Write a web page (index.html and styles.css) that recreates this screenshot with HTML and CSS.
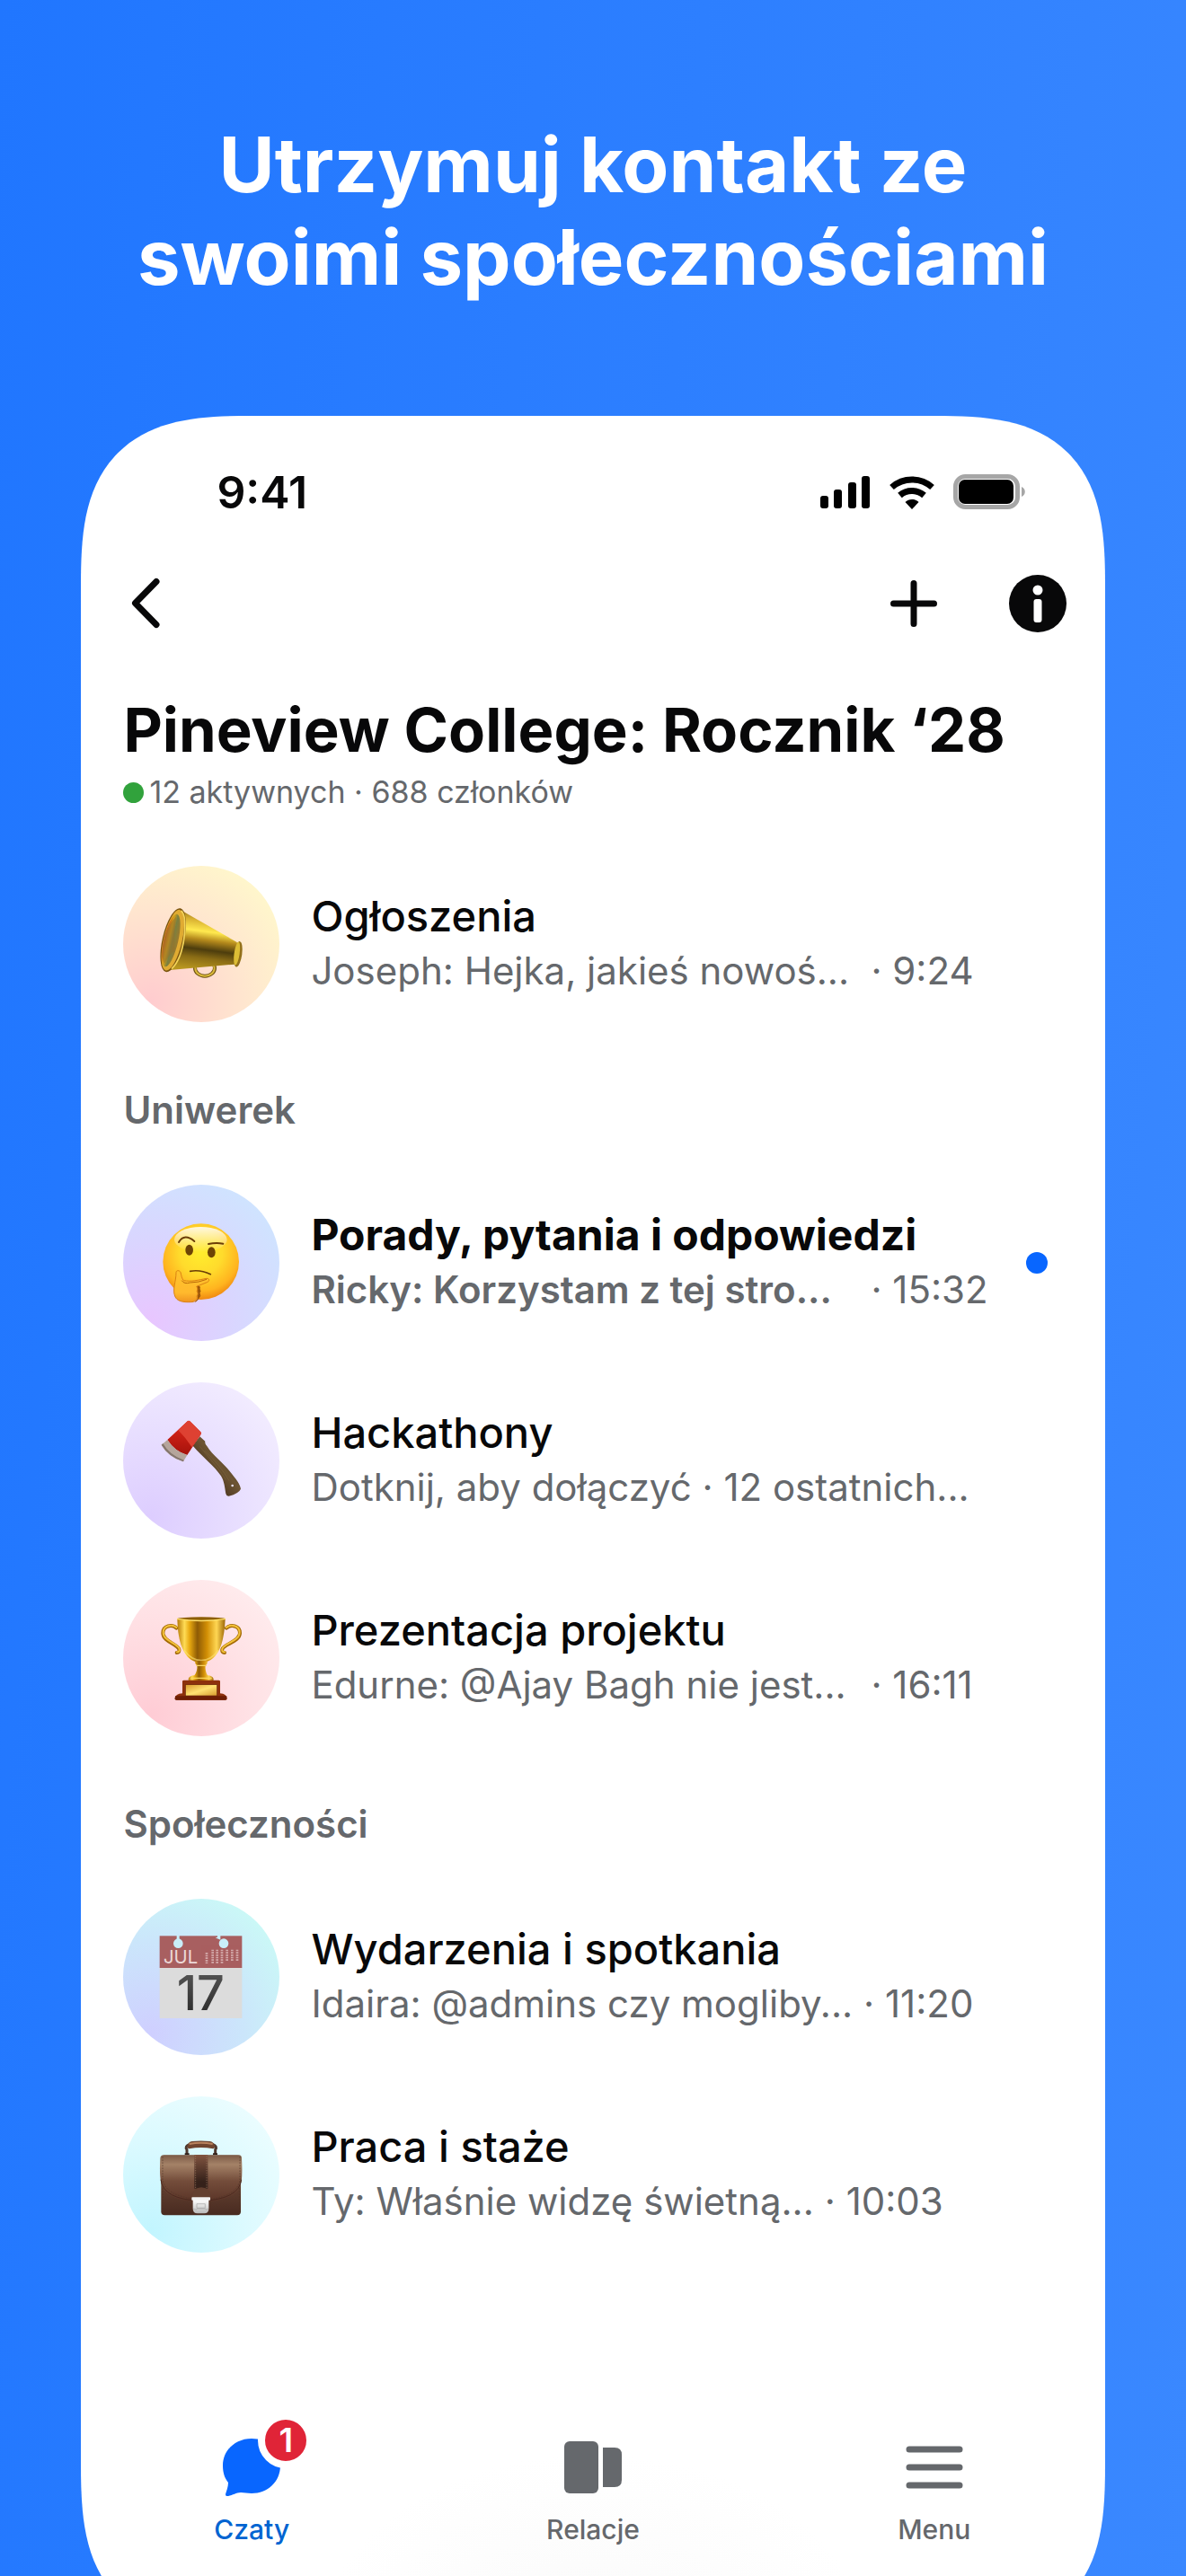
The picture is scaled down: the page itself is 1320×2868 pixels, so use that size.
FILE: index.html
```html
<!DOCTYPE html>
<html lang="pl">
<head>
  <meta charset="UTF-8">
  <meta name="viewport" content="width=device-width, initial-scale=1.0">
  <title>Pineview College: Rocznik ‘28</title>
  <link rel="stylesheet" href="styles.css">
</head>
<body>
  <div class="page">
    <h1 class="headline">Utrzymuj kontakt ze<br>swoimi społecznościami</h1>

    <main class="phone">
      <div class="status">
        <span class="clock">9:41</span>
        <svg class="status-icons" width="230" height="40" viewBox="0 0 230 40" aria-hidden="true">
          <rect x="1" y="24" width="9" height="14" rx="3"/>
          <rect x="16" y="17" width="9" height="21" rx="3"/>
          <rect x="32" y="9" width="9" height="29" rx="3"/>
          <rect x="47" y="2" width="9" height="36" rx="3"/>
          <g fill="none" stroke="#000" stroke-width="7">
            <path d="M80.500 14.500a34 34 0 0 1 45 0"/>
            <path d="M89.500 23.500a20.500 20.500 0 0 1 27 0"/>
          </g>
          <path d="M103 39l-7.500-8c4-4 11-4 15 0z"/>
          <rect x="151.500" y="2.500" width="69" height="34" rx="11" fill="none" stroke="#a6a6a6" stroke-width="5"/>
          <rect x="155" y="6" width="61" height="27" rx="7"/>
          <path d="M225 14c5 2 5 9 0 11z" fill="#a6a6a6"/>
        </svg>
      </div>

      <nav class="topbar">
        <button class="icon-btn" aria-label="Wstecz">
          <svg width="64" height="64" viewBox="0 0 64 64"><path d="M40 7.500L16.500 31.500l23.500 24" fill="none" stroke="#080809" stroke-width="7" stroke-linecap="round" stroke-linejoin="round"/></svg>
        </button>
        <div class="actions">
          <button class="icon-btn" aria-label="Dodaj">
            <svg width="64" height="64" viewBox="0 0 64 64"><path d="M32 9.500v45M9.500 32h45" stroke="#080809" stroke-width="7" stroke-linecap="round"/></svg>
          </button>
          <button class="icon-btn" aria-label="Informacje">
            <svg width="64" height="64" viewBox="0 0 64 64"><circle cx="32" cy="32" r="32" fill="#080809"/><circle cx="32" cy="17" r="5.500" fill="#fff"/><rect x="27.500" y="27" width="9" height="26" rx="3" fill="#fff"/></svg>
          </button>
        </div>
      </nav>

      <h2 class="title">Pineview College: Rocznik ‘28</h2>
      <p class="meta"><span class="online"></span>12 aktywnych · 688 członków</p>

      <ul class="chats">
        <li>
          <a class="chat" href="#">
            <svg class="avatar avatar-yellow" viewBox="50 40 522 522" aria-hidden="true">
              <defs>
                <linearGradient id="horn" x1="0.600" y1="0" x2="0.450" y2="1">
                  <stop offset="0" stop-color="#7a5c10"/><stop offset=".18" stop-color="#d8b030"/><stop offset=".36" stop-color="#ffe94f"/><stop offset=".5" stop-color="#b58a1c"/><stop offset=".66" stop-color="#4d3d0d"/><stop offset=".8" stop-color="#8a6c15"/><stop offset="1" stop-color="#b8961f"/>
                </linearGradient>
                <linearGradient id="bell" x1="0" y1="0" x2="1" y2="0">
                  <stop offset="0" stop-color="#c8541a"/><stop offset=".35" stop-color="#d3a017"/><stop offset=".6" stop-color="#7a8040"/><stop offset="1" stop-color="#9c7a2c"/>
                </linearGradient>
              </defs>
              <ellipse cx="323" cy="381" rx="33" ry="27" fill="none" stroke="#6d5113" stroke-width="12"/>
              <ellipse cx="323" cy="382" rx="32" ry="26" fill="none" stroke="#d9b93a" stroke-width="6"/>
              <path d="M243 188L430 295q10 38-8 74L206 388z" fill="url(#horn)"/>
              <ellipse cx="434" cy="335" rx="13" ry="43" transform="rotate(8 434 335)" fill="#92701a"/>
              <ellipse cx="430" cy="333" rx="9" ry="39" transform="rotate(8 430 333)" fill="#dcbd35"/>
              <ellipse cx="217" cy="288" rx="36" ry="109" transform="rotate(13 217 288)" fill="#7b5511"/>
              <ellipse cx="216" cy="288" rx="31" ry="104" transform="rotate(13 216 288)" fill="#e0ab32"/>
              <ellipse cx="210" cy="289" rx="24" ry="90" transform="rotate(13 210 289)" fill="url(#bell)"/>
              <path d="M190 270q-18 75-1 96 13-30 34-44-4-48 4-112-22 20-37 60z" fill="#97712b" opacity=".55"/>
              <path d="M244 190q18 15 10 88-9 74-42 106" fill="none" stroke="#f3d45a" stroke-width="5"/>
            </svg>
            <div class="chat-text">
              <h4 class="name">Ogłoszenia</h4>
              <p class="line"><span class="preview wide">Joseph: Hejka, jakieś nowoś...</span><time>· 9:24</time></p>
            </div>
          </a>
        </li>
      </ul>

      <h3 class="section">Uniwerek</h3>
      <ul class="chats">
        <li>
          <a class="chat unread" href="#">
            <svg class="avatar avatar-blue" viewBox="50 54 522 522" aria-hidden="true">
              <defs>
                <radialGradient id="face" cx=".5" cy=".38" r=".63">
                  <stop offset="0" stop-color="#ffed2d"/><stop offset=".45" stop-color="#ffdb2c"/><stop offset=".8" stop-color="#ffb41f"/><stop offset="1" stop-color="#ee8410"/>
                </radialGradient>
                <linearGradient id="shine" x1="0" y1="0" x2="0" y2="1">
                  <stop offset="0" stop-color="#fff"/><stop offset="1" stop-color="#fff" stop-opacity="0"/>
                </linearGradient>
                <linearGradient id="hand" x1="0" y1="0" x2="0" y2="1">
                  <stop offset="0" stop-color="#ffc32c"/><stop offset=".7" stop-color="#ffb92d"/><stop offset="1" stop-color="#f09420"/>
                </linearGradient>
              </defs>
              <circle cx="310" cy="311" r="127" fill="url(#face)"/>
              <ellipse cx="309" cy="237" rx="88" ry="42" fill="url(#shine)" opacity=".85"/>
              <ellipse cx="271" cy="272" rx="13" ry="18" fill="#6d4305"/>
              <ellipse cx="345" cy="280" rx="13" ry="18" fill="#6d4305"/>
              <path d="M236 246q19-31 52-3M335 252q26-6 49-1" fill="none" stroke="#6b3d07" stroke-width="6" stroke-linecap="round"/>
              <path d="M274 343q34-6 68 10" fill="none" stroke="#6b3d07" stroke-width="5" stroke-linecap="round"/>
              <path d="M298 389q12 5 7 13 6 8 0 14 6 10-3 17-4 9-11 12l10-10z" fill="#9d570b" stroke="#9d570b" stroke-width="3"/>
              <path d="M227 347c0-8 12-8 15 0 3 12 4 20 10 27 26 5 49-2 77-7 11 0 10 10 1 13l-35 14c4 6 5 10 1 15 5 7 4 12 0 17 4 12-6 20-20 20-27 1-47-3-53-20-9-23 4-48 4-79z" fill="url(#hand)" stroke="#d98014" stroke-width="3"/>
              <path d="M246 374q8 13 28 7 28 0 55-11" fill="none" stroke="#b96909" stroke-width="3"/>
            </svg>
            <div class="chat-text">
              <h4 class="name">Porady, pytania i odpowiedzi</h4>
              <p class="line"><span class="preview wide">Ricky: Korzystam z tej stro...</span><time>· 15:32</time></p>
            </div>
            <span class="unread-dot"></span>
          </a>
        </li>
        <li>
          <a class="chat" href="#">
            <svg class="avatar avatar-violet" viewBox="50 56 522 522" aria-hidden="true">
              <defs>
                <linearGradient id="handle" x1="0" y1="1" x2="1" y2="0">
                  <stop offset=".3" stop-color="#4b3520"/><stop offset=".55" stop-color="#6d5533"/><stop offset=".75" stop-color="#4b3b25"/>
                </linearGradient>
                <linearGradient id="axe" x1="0" y1="0" x2="0" y2="1">
                  <stop offset="0" stop-color="#e1281b"/><stop offset="1" stop-color="#a5120b"/>
                </linearGradient>
              </defs>
              <path d="M283 268L306 237l18 16q-2 8 6 16c18 30 57 59 76 84 22 27 35 44 37 59q-6 15-40 24-8 1-10-8c-4-22-5-41-16-59-22-34-63-64-94-101z" fill="url(#handle)"/>
              <path d="M322 284q55 52 82 101M306 270q60 70 88 112" fill="none" stroke="#8b7048" stroke-width="2" opacity=".6"/>
              <circle cx="415" cy="401" r="4" fill="#e9e2f5"/>
              <path d="M198 248L265 186q4-4 8 0l36 36q4 4 0 9l-45 68q-42-12-66-51z" fill="url(#axe)"/>
              <path d="M234 216l31-30q4-4 8 0l36 36q4 4 0 9l-29 42q-22-33-46-57z" fill="#de4132"/>
              <path d="M198 248q24 38 66 51l-13 22q-50-15-73-56z" fill="#b5a59b"/>
              <path d="M178 265q22 38 73 56l2-5q-47-16-70-56z" fill="#85766d"/>
            </svg>
            <div class="chat-text">
              <h4 class="name">Hackathony</h4>
              <p class="line"><span class="preview">Dotknij, aby dołączyć · 12 ostatnich...</span></p>
            </div>
          </a>
        </li>
        <li>
          <a class="chat" href="#">
            <svg class="avatar avatar-pink" viewBox="50 57 522 522" aria-hidden="true">
              <defs>
                <linearGradient id="cup" x1="0" y1="0" x2="1" y2="0">
                  <stop offset="0" stop-color="#b77a08"/><stop offset=".15" stop-color="#ffdc55"/><stop offset=".26" stop-color="#e6a70f"/><stop offset=".42" stop-color="#8e5b05"/><stop offset=".62" stop-color="#d28f05"/><stop offset=".82" stop-color="#ffd653"/><stop offset="1" stop-color="#9d6706"/>
                </linearGradient>
                <linearGradient id="plate" x1="0" y1="0" x2="1" y2="1">
                  <stop offset="0" stop-color="#d99a2d"/><stop offset=".5" stop-color="#ffe272"/><stop offset="1" stop-color="#d69a2d"/>
                </linearGradient>
              </defs>
              <g fill="none" stroke-linecap="round">
                <path d="M228 218c-14-14-45-9-45 17 0 28 49 36 54 54q2 11-8 11" stroke="#a36a05" stroke-width="12"/>
                <path d="M228 216c-14-12-44-7-44 17 0 28 49 36 54 54q2 11-8 11" stroke="#f3c13a" stroke-width="6"/>
                <path d="M395 218c14-14 45-9 45 17 0 28-54 36-59 54q-2 11 8 11" stroke="#a36a05" stroke-width="12"/>
                <path d="M395 216c14-12 44-7 44 17 0 28-53 36-58 54q-2 11 8 11" stroke="#f3c13a" stroke-width="6"/>
              </g>
              <path d="M231 187h160q-2 52-13 86-17 49-51 58h-34q-33-9-50-58-11-34-12-86z" fill="url(#cup)"/>
              <ellipse cx="311" cy="187" rx="81" ry="6" fill="#8d5e05"/>
              <path d="M230 187q81 13 162 0" fill="none" stroke="#ffdf68" stroke-width="4"/>
              <path d="M254 292q24 34 57 34t57-34" fill="none" stroke="#ffe277" stroke-width="5" opacity=".6"/>
              <path d="M292 328h38q5 8-5 15-2 19 7 33 17 1 20 12 1 10-12 11h-60q-13-1-12-11 3-11 20-12 11-14 9-33-10-7-5-15z" fill="url(#cup)"/>
              <path d="M294 343h34M276 385h70" stroke="#fbd65d" stroke-width="4"/>
              <path d="M248 396q0-4 5-4h116q5 0 5 4v40q22 2 23 17 0 5-5 5H228q-5 0-5-5 1-15 25-17z" fill="#8d310c"/>
              <path d="M224 445h172v9q0 4-5 4H228q-5 0-5-4z" fill="#6d1e05"/>
              <rect x="258" y="407" width="106" height="37" fill="url(#plate)" stroke="#672508" stroke-width="2"/>
            </svg>
            <div class="chat-text">
              <h4 class="name">Prezentacja projektu</h4>
              <p class="line"><span class="preview wide">Edurne: @Ajay Bagh nie jest...</span><time>· 16:11</time></p>
            </div>
          </a>
        </li>
      </ul>

      <h3 class="section">Społeczności</h3>
      <ul class="chats">
        <li>
          <a class="chat" href="#">
            <svg class="avatar avatar-aqua" viewBox="50 42 522 522" aria-hidden="true">
              <defs>
                <linearGradient id="ink" x1="0" y1="0" x2="0" y2="1">
                  <stop offset="0" stop-color="#5c5c5c"/><stop offset="1" stop-color="#262626"/>
                </linearGradient>
              </defs>
              <rect x="172" y="270" width="275" height="171" fill="#dcdcdc"/>
              <rect x="172" y="166" width="275" height="107" fill="#a85f60"/>
              <g fill="#c9eef9">
                <circle cx="234" cy="191" r="16"/><rect x="229" y="165" width="9" height="14"/>
                <circle cx="386" cy="191" r="16"/><path d="M365 165h10v14l-7-3-10-4 7-2z"/>
              </g>
              <text class="cal-month" x="185" y="259">JUL</text>
              <g stroke="#dcb9b9" stroke-width="8" stroke-dasharray="5 3">
                <path d="M349 212v46M364 212v46M380 212v46M397 212v38M414 212v38M431 212v38M329 222v36" opacity=".85"/>
              </g>
              <text class="cal-day" x="309" y="413" text-anchor="middle" fill="url(#ink)">17</text>
            </svg>
            <div class="chat-text">
              <h4 class="name">Wydarzenia i spotkania</h4>
              <p class="line"><span class="preview">Idaira: @admins czy mogliby...</span><time>· 11:20</time></p>
            </div>
          </a>
        </li>
        <li>
          <a class="chat" href="#">
            <svg class="avatar avatar-cyan" viewBox="50 44 522 522" aria-hidden="true">
              <defs>
                <linearGradient id="case" x1="0" y1="0" x2="0" y2="1">
                  <stop offset="0" stop-color="#7d5641"/><stop offset="1" stop-color="#482a20"/>
                </linearGradient>
                <linearGradient id="flap" x1="0" y1="0" x2="0" y2="1">
                  <stop offset="0" stop-color="#7b5a46"/><stop offset=".2" stop-color="#a48267"/><stop offset=".55" stop-color="#744d3b"/><stop offset="1" stop-color="#5a3427"/>
                </linearGradient>
                <linearGradient id="strap" x1="0" y1="0" x2="0" y2="1">
                  <stop offset="0" stop-color="#805440"/><stop offset=".8" stop-color="#35211a"/>
                </linearGradient>
                <linearGradient id="lock" x1="0" y1="0" x2="0" y2="1">
                  <stop offset="0" stop-color="#fff"/><stop offset="1" stop-color="#b9b9b9"/>
                </linearGradient>
              </defs>
              <path d="M263 238v-16q-8-12 9-18M358 238v-16q8-12-9-18" fill="none" stroke="#4e392f" stroke-width="9"/>
              <path d="M256 237h15M350 237h15" stroke="#2f211b" stroke-width="6"/>
              <path d="M265 209q3-14 15-15 30-3 60 0 12 1 16 15 1 10-6 10-40-8-79 0-7 0-6-10z" fill="#71452f"/>
              <path d="M271 203q39-8 78 0" fill="none" stroke="#b9835e" stroke-width="6"/>
              <rect x="177" y="241" width="266" height="200" rx="12" fill="url(#case)"/>
              <path d="M186 240h250q10 0 10 11 3 51-1 77-8 65-135 69-125-4-134-69-5-26-2-77 1-11 12-11z" fill="url(#flap)"/>
              <path d="M176 322q8 67 134 71 127-4 135-71" fill="none" stroke="#4b2a20" stroke-width="3"/>
              <path d="M182 246v78q12 52 108 63M440 246v78q-9 50-95 63M182 350v83M438 350v83" fill="none" stroke="#523628" stroke-width="2" stroke-dasharray="5 4"/>
              <path d="M288 239h45v113h-45z" fill="url(#strap)"/>
              <path d="M292 242v108M329 242v108" stroke="#a07d65" stroke-width="2" stroke-dasharray="4 4"/>
              <path d="M281 383v-10q4-24 30-25 27 1 30 25v10z" fill="#634030"/>
              <path d="M283 389h53v29q0 17-15 17h-23q-15 0-15-17z" fill="url(#lock)"/>
              <rect x="279" y="381" width="62" height="10" rx="2" fill="#f1f1f1"/>
              <path d="M296 403h28v14h-28zM284 420q12 5 15-1h24q3 6 12 1" fill="none" stroke="#a5a5a5" stroke-width="2"/>
            </svg>
            <div class="chat-text">
              <h4 class="name">Praca i staże</h4>
              <p class="line"><span class="preview">Ty: Właśnie widzę świetną...</span><time>· 10:03</time></p>
            </div>
          </a>
        </li>
      </ul>

      <nav class="tabs">
        <a class="tab active" href="#">
          <span class="tab-icon">
            <svg width="66" height="66" viewBox="0 0 66 66" aria-hidden="true"><path d="M33 1C15 1 1 14 1 31c0 8 2 14 6 19 0 5-2 9-3 13 0 2 1 2 3 2 5-1 9-4 14-4 4 0 7 1 12 1 18 0 32-13 32-31C65 14 51 1 33 1z" fill="#0866ff"/></svg>
            <span class="badge">1</span>
          </span>
          Czaty
        </a>
        <a class="tab" href="#">
          <span class="tab-icon">
            <svg width="66" height="66" viewBox="0 0 66 66" fill="#65686c" aria-hidden="true"><rect x="1" y="4" width="38" height="58" rx="6"/><path d="M44 11h13q8 0 8 8v28q0 8-8 8H44z"/></svg>
          </span>
          Relacje
        </a>
        <a class="tab" href="#">
          <span class="tab-icon">
            <svg width="66" height="66" viewBox="0 0 66 66" aria-hidden="true"><path d="M5 13h56M5 33h56M5 53h56" stroke="#65686c" stroke-width="7" stroke-linecap="round"/></svg>
          </span>
          Menu
        </a>
      </nav>
    </main>
  </div>
</body>
</html>
```
FILE: styles.css
```css
:root {
  --text: #080809;
  --muted: #65686c;
  --accent: #0866ff;
}
* {
  box-sizing: border-box;
}
body, h1, h2, h3, h4, p, ul {
  margin: 0;
}
body {
  font-family: Inter, "Liberation Sans", sans-serif;
  color: var(--text);
}
a {
  color: inherit;
  text-decoration: none;
}
svg {
  display: block;
}
.page {
  display: flex;
  flex-direction: column;
  height: 100vh;
  min-height: 2800px;
  overflow: hidden;
  padding: 132px 7% 0;
  background: linear-gradient(95deg, #2076ff, #3a88ff);
}
.headline {
  font-size: 85px;
  font-weight: 700;
  line-height: 103px;
  text-align: center;
  white-space: nowrap;
  color: #fff;
}

/* the phone runs past the bottom edge of the page */
.phone {
  flex: 1;
  display: flex;
  flex-direction: column;
  margin: 125px -2px -65px;
  padding: 55px 0 99px;
  border-radius: 140px;
  background: radial-gradient(ellipse 300px 200px at 50% 100%, #fafafa, #fff) #fff;
}
@supports (corner-shape: superellipse(1.5)) {
  .phone {
    border-radius: 190px;
    corner-shape: superellipse(1.5);
  }
}
.status {
  display: flex;
  align-items: center;
  justify-content: space-between;
  height: 60px;
  padding: 0 88px 0 151px;
}
.clock {
  font-size: 50px;
  font-weight: 600;
}
.topbar {
  display: flex;
  justify-content: space-between;
  margin-top: 62px;
  padding: 0 43px 0 44px;
}
.actions {
  display: flex;
  gap: 74px;
}
.icon-btn {
  padding: 0;
  border: none;
  background: none;
  cursor: pointer;
}
.title {
  margin-top: 69px;
  padding: 0 47px;
  font-size: 67px;
  font-weight: 700;
  line-height: 80px;
}
.meta {
  display: flex;
  align-items: center;
  gap: 6px;
  margin-top: 7px;
  padding: 0 47px;
  font-size: 34px;
  line-height: 44px;
  color: var(--muted);
}
.online {
  width: 23px;
  height: 23px;
  border-radius: 50%;
  background: #31a23c;
}
.meta + .chats {
  margin-top: 37px;
}
.chats {
  padding: 0;
  list-style: none;
}
.chat {
  display: flex;
  align-items: center;
  gap: 35px;
  height: 220px;
  padding: 0 64px 0 47px;
}
.avatar {
  flex: none;
  width: 174px;
  height: 174px;
  border-radius: 50%;
}
.avatar-yellow {
  background: radial-gradient(circle at 18% 86%, #ffcccf, #ffe6cf 50%, #fffacb 90%);
}
.avatar-blue {
  background: radial-gradient(circle at 18% 86%, #e8c6ff, #d9d6ff 45%, #cce8ff 95%);
}
.avatar-violet {
  background: radial-gradient(circle at 18% 86%, #ddcdff, #e9e0ff 50%, #f5f0ff 95%);
}
.avatar-pink {
  background: radial-gradient(circle at 18% 86%, #ffccd5, #ffe0e4 50%, #ffeff0 95%);
}
.avatar-aqua {
  background: radial-gradient(circle at 18% 86%, #cfcfff, #cbe6fb 50%, #cafff5 95%);
}
.avatar-cyan {
  background: radial-gradient(circle at 18% 86%, #c2f5ff, #dcfaff 50%, #f0feff 95%);
}
.cal-month {
  font: 400 61px Inter, sans-serif;
  fill: #ecd8d8;
}
.cal-day {
  font: 500 162px Inter, sans-serif;
}
.chat-text {
  flex: 1;
  min-width: 0;
}
.name {
  font-size: 47px;
  font-weight: 500;
  line-height: 60px;
}
.line {
  display: flex;
  gap: 12px;
  font-size: 42px;
  line-height: 62px;
  white-space: nowrap;
  color: var(--muted);
}
.wide {
  min-width: 611px;
}
.unread .name {
  font-size: 48px;
  font-weight: 700;
}
.unread .preview {
  font-weight: 600;
}
.unread-dot {
  width: 24px;
  height: 24px;
  border-radius: 50%;
  background: var(--accent);
}
.section {
  height: 135px;
  padding: 45px 47px 0;
  font-size: 42px;
  font-weight: 600;
  line-height: 60px;
  color: var(--muted);
}
.tabs {
  display: grid;
  grid-template-columns: repeat(3, 1fr);
  margin-top: auto;
}
.tab {
  display: flex;
  flex-direction: column;
  align-items: center;
  gap: 18px;
  font-size: 30px;
  font-weight: 500;
  line-height: 36px;
  color: var(--muted);
}
.tab.active {
  color: #0064d1;
}
.tab-icon {
  position: relative;
}
.badge {
  position: absolute;
  top: -28px;
  right: -36px;
  width: 62px;
  height: 62px;
  border: 8px solid #fff;
  border-radius: 50%;
  background: #e02437;
  color: #fff;
  font-size: 37px;
  font-weight: 600;
  line-height: 46px;
  text-align: center;
}
```
